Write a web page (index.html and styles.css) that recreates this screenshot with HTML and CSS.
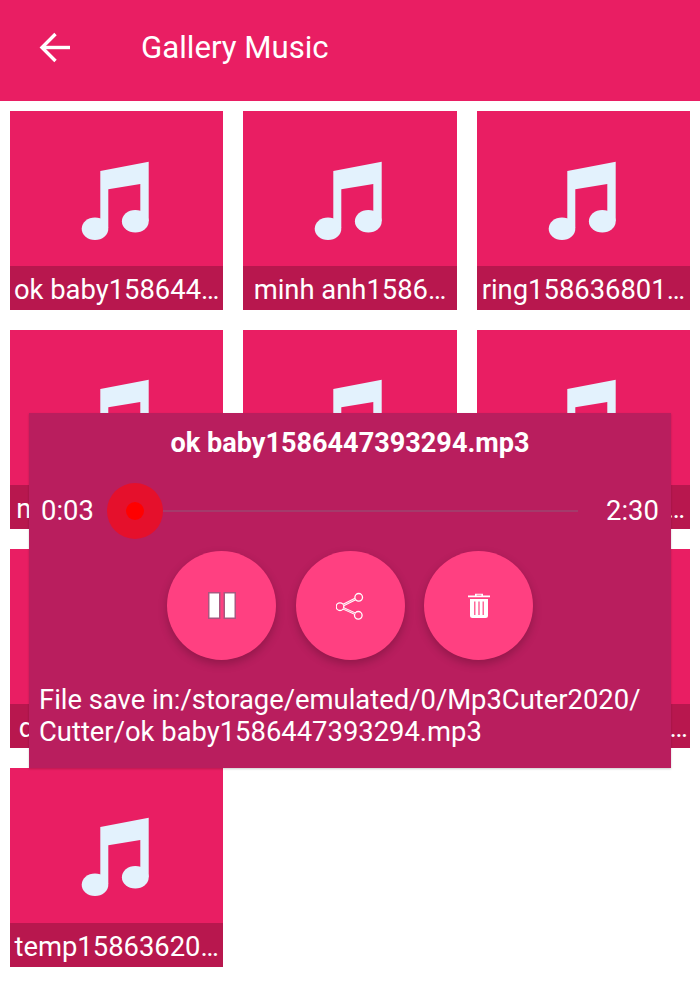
FILE: index.html
```html
<!DOCTYPE html>
<html lang="en">
<head>
  <meta charset="UTF-8" />
  <title>Gallery Music</title>
  <link rel="stylesheet" href="styles.css">
</head>
<body>
  <svg class="defs" width="0" height="0">
    <symbol id="note" viewBox="0 0 68 79">
      <polygon points="19.3,10 67.7,0.7 67.7,60 59.3,60 59.3,23 27.3,28.3 27.3,67 19.3,67" />
      <ellipse cx="54.3" cy="60.3" rx="13.4" ry="11.3" />
      <ellipse cx="14" cy="67.7" rx="13.3" ry="11.3" />
    </symbol>
  </svg>

  <div class="app">
    <header class="toolbar">
      <svg class="back" viewBox="0 0 32 32" width="32" height="32" fill="none" stroke="#fff" stroke-width="3.4">
        <path d="M31 15.5H3" />
        <path d="M16.5 2L3 15.5L16.5 29" />
      </svg>
      <div class="title">Gallery Music</div>
    </header>

    <div class="grid">
      <div class="card">
        <div class="art"><svg class="note"><use href="#note" /></svg></div>
        <div class="name">ok baby158644…</div>
      </div>
      <div class="card">
        <div class="art"><svg class="note"><use href="#note" /></svg></div>
        <div class="name">minh anh1586…</div>
      </div>
      <div class="card">
        <div class="art"><svg class="note"><use href="#note" /></svg></div>
        <div class="name">ring158636801…</div>
      </div>
      <div class="card">
        <div class="art"><svg class="note"><use href="#note" /></svg></div>
        <div class="name">nhac15863620…</div>
      </div>
      <div class="card">
        <div class="art"><svg class="note"><use href="#note" /></svg></div>
        <div class="name">test158636…</div>
      </div>
      <div class="card">
        <div class="art"><svg class="note"><use href="#note" /></svg></div>
        <div class="name">ring158636801…</div>
      </div>
      <div class="card">
        <div class="art"><svg class="note"><use href="#note" /></svg></div>
        <div class="name">demo1586362…</div>
      </div>
      <div class="card">
        <div class="art"><svg class="note"><use href="#note" /></svg></div>
        <div class="name">song158636…</div>
      </div>
      <div class="card">
        <div class="art"><svg class="note"><use href="#note" /></svg></div>
        <div class="name">audio15863680…</div>
      </div>
      <div class="card">
        <div class="art"><svg class="note"><use href="#note" /></svg></div>
        <div class="name">temp15863620…</div>
      </div>
    </div>

    <!-- Player dialog -->
    <div class="player">
      <div class="player-title">ok baby1586447393294.mp3</div>
      <div class="seek-row">
        <span class="time">0:03</span>
        <div class="seek">
          <div class="track"></div>
          <div class="halo"><div class="thumb"></div></div>
        </div>
        <span class="time">2:30</span>
      </div>
      <div class="actions">
        <button class="fab">
          <svg viewBox="0 0 28 27" width="28" height="27">
            <rect x="0" y="0" width="28" height="27" fill="#a9577f" />
            <rect x="1.5" y="1.5" width="9.5" height="24" fill="#fff" />
            <rect x="17" y="1.5" width="9.5" height="24" fill="#fff" />
            <rect x="12.5" y="0" width="3" height="27" fill="#ff4081" />
          </svg>
        </button>
        <button class="fab">
          <svg viewBox="0 0 28 28" width="28" height="28" fill="none" stroke="#fff" stroke-width="1.3">
            <circle cx="22.7" cy="5.3" r="3.8" />
            <circle cx="4" cy="14.7" r="3.8" />
            <circle cx="22.3" cy="23.3" r="3.8" />
            <path d="M7.4 13L19.3 7M7.4 16.4L19 21.6" stroke-width="2.6" />
            <path d="M7.4 13L19.3 7M7.4 16.4L19 21.6" stroke="#ff8fb5" stroke-width="0.9" />
          </svg>
        </button>
        <button class="fab">
          <svg viewBox="0 0 22 25" width="22" height="25" fill="#fff">
            <path d="M7 2.5V0.8H15V2.5H22V4.2H0V2.5ZM8.6 1.8V2.6H13.4V1.8Z" fill-rule="evenodd" />
            <path d="M2 6H20V22.5Q20 25 17.5 25H4.5Q2 25 2 22.5ZM6.2 8.5V22H7.4V8.5ZM10.4 8.5V22H11.6V8.5ZM14.6 8.5V22H15.8V8.5Z" fill-rule="evenodd" />
          </svg>
        </button>
      </div>
      <div class="path">File save in:/storage/emulated/0/Mp3Cuter2020/<br>Cutter/ok baby1586447393294.mp3</div>
    </div>
  </div>
</body>
</html>
```

FILE: styles.css
```css
body {
  margin: 0;
  font-family: 'Roboto', 'Noto Sans', sans-serif;
  background: #fff;
  color: #fff;
}

.defs {
  position: absolute;
}

.app {
  position: relative;
  width: 700px;
  height: 990px;
  overflow: hidden;
}

.toolbar {
  height: 101px;
  background: #e91e63;
  display: flex;
  align-items: center;
  padding: 0 0 6px 39px;
  box-sizing: border-box;
}

.back {
  flex: none;
}

.title {
  margin-left: 70px;
  font-size: 31.2px;
}

.grid {
  display: grid;
  grid-template-columns: repeat(3, minmax(0, 1fr));
  grid-auto-rows: 198.7px;
  gap: 20.3px 20px;
  padding: 10px;
}

.card {
  background: #e91e63;
  display: flex;
  flex-direction: column;
}

.art {
  flex: 1;
  display: flex;
  justify-content: center;
  padding: 49.5px 3px 0 0;
}

.note {
  width: 68px;
  height: 79px;
  fill: #e3f2fd;
}

.name {
  height: 44px;
  line-height: 48px;
  background: #b8174e;
  font-size: 27.4px;
  text-align: center;
  white-space: nowrap;
  overflow: hidden;
}

/* Player dialog */
.player {
  position: absolute;
  top: 413px;
  left: 29px;
  width: 642px;
  height: 355px;
  background: #b91e5e;
  box-shadow: 0 1px 2px rgba(0, 0, 0, 0.2);
}

.player-title {
  margin-top: 14px;
  height: 32px;
  line-height: 32px;
  font-size: 27.1px;
  font-weight: bold;
  text-align: center;
}

.seek-row {
  display: flex;
  align-items: center;
  margin-top: 24px;
  padding: 0 13px 0 12px;
  height: 56px;
}

.time {
  font-size: 27.4px;
  flex: none;
  width: 52px;
}

.seek {
  flex: 1;
  position: relative;
  height: 56px;
  margin: 0 28px 0 14px;
}

.track {
  position: absolute;
  top: 27px;
  left: 28px;
  right: 0;
  height: 2px;
  background: #a53a6b;
}

.halo {
  position: absolute;
  top: 0;
  left: 0;
  width: 56px;
  height: 56px;
  border-radius: 50%;
  background: #e5102c;
  display: flex;
  align-items: center;
  justify-content: center;
}

.thumb {
  width: 18px;
  height: 18px;
  border-radius: 50%;
  background: #ff0000;
}

.actions {
  display: flex;
  justify-content: center;
  gap: 19.5px;
  margin-top: 12px;
}

.fab {
  width: 109px;
  height: 109px;
  border: none;
  padding: 0;
  border-radius: 50%;
  background: #ff4081;
  box-shadow: 0 4px 10px rgba(0, 0, 0, 0.22);
  display: flex;
  align-items: center;
  justify-content: center;
}

.path {
  margin: 24px 0 0 10px;
  font-size: 27.4px;
  line-height: 32px;
}
```
